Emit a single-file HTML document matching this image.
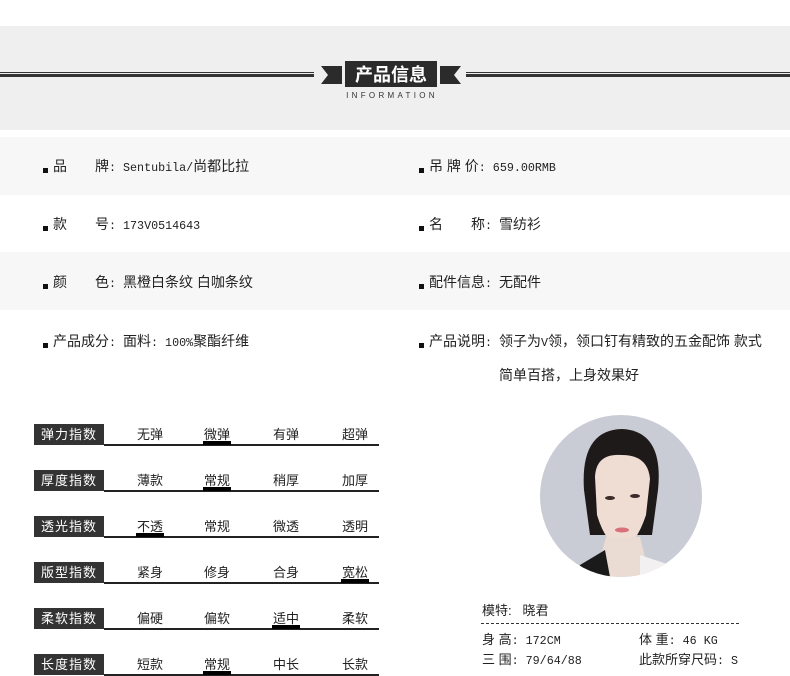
<!DOCTYPE html>
<html><head><meta charset="utf-8"><style>
*{margin:0;padding:0;box-sizing:border-box}
body{width:790px;height:676px;background:#fff;position:relative;overflow:hidden;font-family:"Liberation Sans","Noto Sans CJK SC",sans-serif;font-size:14px;color:#222}
.a{position:absolute}
.band{position:absolute;left:0;width:790px;background:#f7f7f7}
.bul{position:absolute;width:5px;height:5px;background:#111}
.t{position:absolute;white-space:nowrap;line-height:16px}
.m{font-family:"Liberation Mono",monospace;font-size:11.7px}
.lab{position:absolute;left:34px;width:70px;height:21px;background:#333;color:#fff;font-size:13px;line-height:21px;text-align:center;letter-spacing:1px}
.ln{position:absolute;left:104px;width:275px;height:2px;background:#222}
.op{position:absolute;width:40px;text-align:center;font-size:13px}
.sel{position:absolute;width:28px;height:4px;background:#000}
</style></head><body>
<div class="a" style="left:0;top:26px;width:790px;height:104px;background:#efefef"></div>
<div class="a" style="left:0;top:72px;width:314px;height:1px;background:#333"></div>
<div class="a" style="left:0;top:74px;width:314px;height:3px;background:#333"></div>
<div class="a" style="left:466px;top:72px;width:324px;height:1px;background:#333"></div>
<div class="a" style="left:466px;top:74px;width:324px;height:3px;background:#333"></div>
<svg class="a" style="left:320px;top:62px" width="150" height="26"><polygon points="1,4 22,4 22,22 1,22 8,13" fill="#2b2b2b"/><polygon points="141,4 120,4 120,22 141,22 134,13" fill="#2b2b2b"/></svg>
<div class="a" style="left:345px;top:61px;width:92px;height:26px;background:#2b2b2b;color:#fff;font-family:'Noto Sans CJK SC',sans-serif;font-size:18px;font-weight:bold;line-height:26px;text-align:center">产品信息</div>
<div class="a" style="left:340px;top:91px;width:104px;text-align:center;font-size:8px;letter-spacing:3.3px;color:#333">INFORMATION</div>

<div class="band" style="top:137px;height:58px"></div>
<div class="band" style="top:252px;height:58px"></div>

<div class="bul" style="left:43px;top:168px"></div><div class="t" style="left:53px;top:158px">品</div><div class="t" style="left:95px;top:158px">牌<span class="m">: Sentubila/</span>尚都比拉</div>
<div class="bul" style="left:419px;top:168px"></div><div class="t" style="left:429px;top:158px">吊 牌 价<span class="m">: 659.00RMB</span></div>
<div class="bul" style="left:43px;top:226px"></div><div class="t" style="left:53px;top:216px">款</div><div class="t" style="left:95px;top:216px">号<span class="m">: 173V0514643</span></div>
<div class="bul" style="left:419px;top:226px"></div><div class="t" style="left:429px;top:216px">名</div><div class="t" style="left:471px;top:216px">称<span class="m">: </span>雪纺衫</div>
<div class="bul" style="left:43px;top:284px"></div><div class="t" style="left:53px;top:274px">颜</div><div class="t" style="left:95px;top:274px">色<span class="m">: </span>黑橙白条纹 白咖条纹</div>
<div class="bul" style="left:419px;top:284px"></div><div class="t" style="left:429px;top:274px">配件信息<span class="m">: </span>无配件</div>
<div class="bul" style="left:43px;top:343px"></div><div class="t" style="left:53px;top:333px">产品成分<span class="m">: </span>面料<span class="m">: 100%</span>聚酯纤维</div>
<div class="bul" style="left:419px;top:343px"></div><div class="t" style="left:429px;top:333px">产品说明<span class="m">: </span>领子为<span class="m">V</span>领，领口钉有精致的五金配饰 款式</div>
<div class="t" style="left:499px;top:367px">简单百搭，上身效果好</div>

<div class="lab" style="top:424px">弹力指数</div><div class="ln" style="top:444px"></div>
<div class="op" style="left:130px;top:424px">无弹</div><div class="op" style="left:197px;top:424px">微弹</div><div class="op" style="left:266px;top:424px">有弹</div><div class="op" style="left:335px;top:424px">超弹</div><div class="sel" style="left:203px;top:441px"></div>
<div class="lab" style="top:470px">厚度指数</div><div class="ln" style="top:490px"></div>
<div class="op" style="left:130px;top:470px">薄款</div><div class="op" style="left:197px;top:470px">常规</div><div class="op" style="left:266px;top:470px">稍厚</div><div class="op" style="left:335px;top:470px">加厚</div><div class="sel" style="left:203px;top:487px"></div>
<div class="lab" style="top:516px">透光指数</div><div class="ln" style="top:536px"></div>
<div class="op" style="left:130px;top:516px">不透</div><div class="op" style="left:197px;top:516px">常规</div><div class="op" style="left:266px;top:516px">微透</div><div class="op" style="left:335px;top:516px">透明</div><div class="sel" style="left:136px;top:533px"></div>
<div class="lab" style="top:562px">版型指数</div><div class="ln" style="top:582px"></div>
<div class="op" style="left:130px;top:562px">紧身</div><div class="op" style="left:197px;top:562px">修身</div><div class="op" style="left:266px;top:562px">合身</div><div class="op" style="left:335px;top:562px">宽松</div><div class="sel" style="left:341px;top:579px"></div>
<div class="lab" style="top:608px">柔软指数</div><div class="ln" style="top:628px"></div>
<div class="op" style="left:130px;top:608px">偏硬</div><div class="op" style="left:197px;top:608px">偏软</div><div class="op" style="left:266px;top:608px">适中</div><div class="op" style="left:335px;top:608px">柔软</div><div class="sel" style="left:272px;top:625px"></div>
<div class="lab" style="top:654px">长度指数</div><div class="ln" style="top:674px"></div>
<div class="op" style="left:130px;top:654px">短款</div><div class="op" style="left:197px;top:654px">常规</div><div class="op" style="left:266px;top:654px">中长</div><div class="op" style="left:335px;top:654px">长款</div><div class="sel" style="left:203px;top:671px"></div>

<svg class="a" style="left:540px;top:415px" width="162" height="162">
<defs><clipPath id="c"><circle cx="81" cy="81" r="81"/></clipPath></defs>
<g clip-path="url(#c)">
<rect width="162" height="162" fill="#c9ccd4"/>
<path d="M44 75 Q40 15 82 14 Q124 16 118 75 L112 120 L50 120Z" fill="#1e1a1a"/>
<path d="M55 62 Q56 38 82 40 Q108 40 110 64 L106 100 Q96 130 82 133 Q66 130 57 100Z" fill="#efdcd3"/>
<path d="M66 122 L100 122 L110 162 L55 162Z" fill="#eadbd3"/>
<path d="M40 150 L65 135 L70 162 L35 162Z" fill="#1a1a1a"/>
<path d="M100 140 L130 150 L130 162 L100 162Z" fill="#f3f0f2"/>
<ellipse cx="70" cy="83" rx="5" ry="2" fill="#3a2a28"/><ellipse cx="95" cy="81" rx="5" ry="2" fill="#3a2a28"/>
<ellipse cx="82" cy="115" rx="7" ry="2.5" fill="#d9707a"/>
</g></svg>

<div class="t" style="left:482px;top:603px;font-size:13px">模特:&nbsp;&nbsp;&nbsp;晓君</div>
<div class="a" style="left:481px;top:623px;width:258px;border-top:1px dashed #333"></div>
<div class="t" style="left:482px;top:632px;font-size:13px">身 高<span class="m">: 172CM</span></div>
<div class="t" style="left:639px;top:632px;font-size:13px">体 重<span class="m">: 46 KG</span></div>
<div class="t" style="left:482px;top:652px;font-size:13px">三 围<span class="m">: 79/64/88</span></div>
<div class="t" style="left:639px;top:652px;font-size:13px">此款所穿尺码<span class="m">: S</span></div>
</body></html>
